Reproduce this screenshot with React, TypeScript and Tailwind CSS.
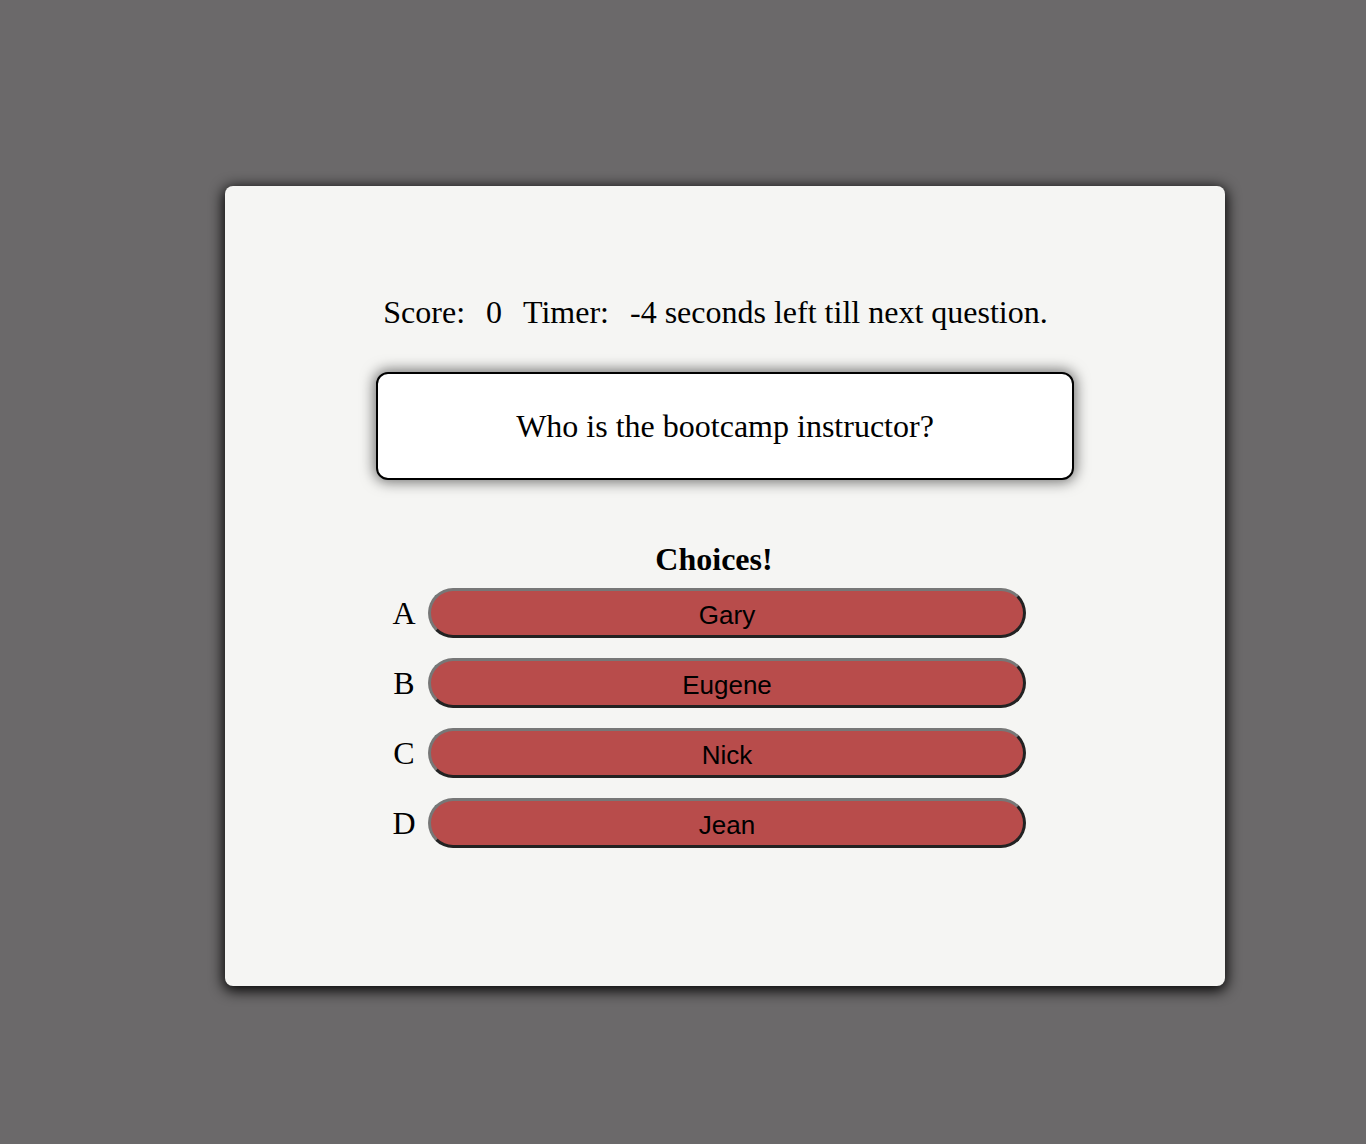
const choices = [
  { letter: 'A', name: 'Gary' },
  { letter: 'B', name: 'Eugene' },
  { letter: 'C', name: 'Nick' },
  { letter: 'D', name: 'Jean' },
];

export default function App() {
  return (
    <div className="min-h-screen bg-[#6b696a] pt-[186px] pl-[225px] font-['Liberation_Serif',serif] text-black">
      <div className="w-[1000px] h-[800px] bg-[#f5f5f3] rounded-[8px] shadow-[0_3px_14px_2px_rgba(0,0,0,0.95)] pt-[108px]">
        {/* score + timer */}
        <div className="flex justify-center pr-[19px] text-[32px] leading-[37px]">
          <span>Score:</span>
          <span className="ml-[21px]">0</span>
          <span className="ml-[21px]">Timer:</span>
          <span className="ml-[21px]">-4 seconds left till next question.</span>
        </div>

        {/* question */}
        <div className="mx-auto mt-[41px] w-[698px] h-[108px] flex items-center justify-center bg-white border-2 border-black rounded-[12px] shadow-[0_0_14px_2px_rgba(0,0,0,0.55)]">
          <p className="text-[32px] leading-[37px]">Who is the bootcamp instructor?</p>
        </div>

        {/* choices */}
        <div className="ml-[167px] w-[634px] mt-[61px]">
          <h2 className="text-center pl-[10px] text-[32px] leading-[37px] font-bold">Choices!</h2>
          <div className="mt-[10px] flex flex-col gap-[20px]">
            {choices.map((c) => (
              <div key={c.letter} className="flex items-center gap-[12px]">
                <span className="w-[24px] text-center text-[32px] leading-[37px]">{c.letter}</span>
                <button className="w-[598px] h-[50px] rounded-full bg-[#b84c4b] border-[3px] border-t-[#777] border-l-[#777] border-b-[#222] border-r-[#222] pt-[4px] font-['Liberation_Sans',Arial,sans-serif] text-[26px] leading-[30px] text-black">
                  {c.name}
                </button>
              </div>
            ))}
          </div>
        </div>
      </div>
    </div>
  );
}
